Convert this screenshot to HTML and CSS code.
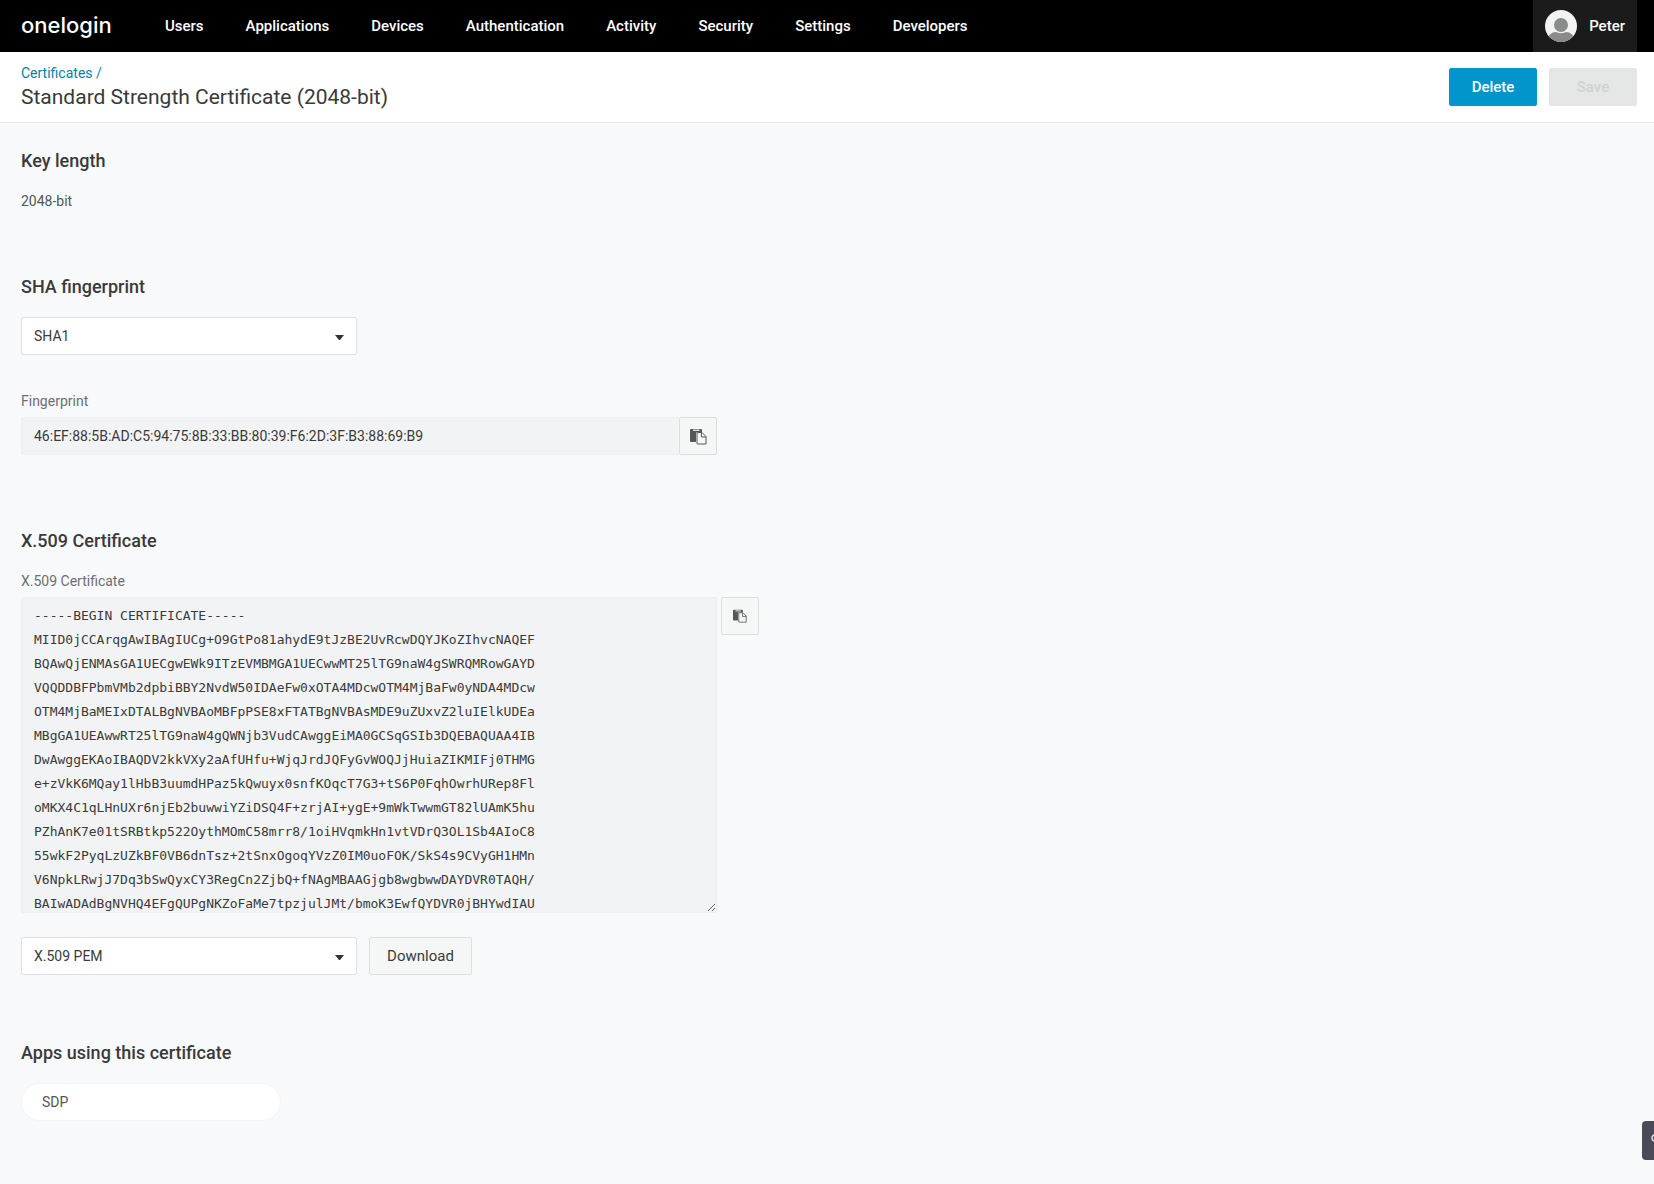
FILE: index.html
```html
<!DOCTYPE html>
<html lang="en">
<head>
  <meta charset="UTF-8">
  <meta name="viewport" content="width=device-width, initial-scale=1.0">
  <title>Standard Strength Certificate (2048-bit)</title>
  <link rel="stylesheet" href="styles.css">
</head>
<body>
  <header class="topbar">
    <a class="logo" href="#">onelogin</a>
    <nav class="menu">
      <a href="#">Users</a>
      <a href="#">Applications</a>
      <a href="#">Devices</a>
      <a href="#">Authentication</a>
      <a href="#">Activity</a>
      <a href="#">Security</a>
      <a href="#">Settings</a>
      <a href="#">Developers</a>
    </nav>
    <button class="user" type="button">
      <svg class="avatar" viewBox="0 0 32 32" aria-hidden="true">
        <clipPath id="face"><circle cx="16" cy="16" r="16"/></clipPath>
        <g clip-path="url(#face)">
          <rect width="32" height="32" fill="#f3f3f3"/>
          <circle cx="16" cy="15" r="7" fill="#8a8c8b"/>
          <path d="M2 34c0-8 4-12 9-12 2 1.500 8 1.500 10 0 5 0 9 4 9 12z" fill="#8a8c8b"/>
        </g>
      </svg>
      Peter
    </button>
  </header>

  <div class="page-header">
    <div>
      <a class="breadcrumb" href="#">Certificates /</a>
      <h1>Standard Strength Certificate (2048-bit)</h1>
    </div>
    <div class="actions">
      <button class="btn primary" type="button">Delete</button>
      <button class="btn" type="button" disabled>Save</button>
    </div>
  </div>

  <main>
    <section class="key-length">
      <h2>Key length</h2>
      <p>2048-bit</p>
    </section>

    <section class="sha">
      <h2>SHA fingerprint</h2>
      <select class="select" aria-label="SHA fingerprint">
        <option>SHA1</option>
      </select>
      <label class="fingerprint-label" for="fingerprint">Fingerprint</label>
      <div class="copy-field">
        <input type="text" id="fingerprint" value="46:EF:88:5B:AD:C5:94:75:8B:33:BB:80:39:F6:2D:3F:B3:88:69:B9" readonly>
        <button class="btn copy" type="button" aria-label="Copy fingerprint">
          <svg width="17" height="17" viewBox="0 0 17 17" aria-hidden="true">
            <path d="M1 1h10q1 0 1 1v2H7.500q-1.500 0-1.500 1.500V14H1q-1 0-1-1V2q0-1 1-1z" fill="#555857"/>
            <path d="M3 1.500h6.500v1.500H3z" fill="#d8dad9"/>
            <path d="M7.500 4.500h4.500l4 4v7.500h-8.500q-.5 0-.5-.5V5q0-.5.5-.5z" fill="#f5f7f6" stroke="#555857"/>
            <path d="M11.500 4.500v4.500h4.500" fill="none" stroke="#555857"/>
          </svg>
        </button>
      </div>
    </section>

    <section class="x509">
      <h2>X.509 Certificate</h2>
      <label for="certificate">X.509 Certificate</label>
      <div class="copy-field spaced">
        <textarea id="certificate" readonly spellcheck="false">-----BEGIN CERTIFICATE-----
MIID0jCCArqgAwIBAgIUCg+O9GtPo81ahydE9tJzBE2UvRcwDQYJKoZIhvcNAQEF
BQAwQjENMAsGA1UECgwEWk9ITzEVMBMGA1UECwwMT25lTG9naW4gSWRQMRowGAYD
VQQDDBFPbmVMb2dpbiBBY2NvdW50IDAeFw0xOTA4MDcwOTM4MjBaFw0yNDA4MDcw
OTM4MjBaMEIxDTALBgNVBAoMBFpPSE8xFTATBgNVBAsMDE9uZUxvZ2luIElkUDEa
MBgGA1UEAwwRT25lTG9naW4gQWNjb3VudCAwggEiMA0GCSqGSIb3DQEBAQUAA4IB
DwAwggEKAoIBAQDV2kkVXy2aAfUHfu+WjqJrdJQFyGvWOQJjHuiaZIKMIFj0THMG
e+zVkK6MQay1lHbB3uumdHPaz5kQwuyx0snfKOqcT7G3+tS6P0FqhOwrhURep8Fl
oMKX4C1qLHnUXr6njEb2buwwiYZiDSQ4F+zrjAI+ygE+9mWkTwwmGT82lUAmK5hu
PZhAnK7e01tSRBtkp522OythMOmC58mrr8/1oiHVqmkHn1vtVDrQ3OL1Sb4AIoC8
55wkF2PyqLzUZkBF0VB6dnTsz+2tSnxOgoqYVzZ0IM0uoFOK/SkS4s9CVyGH1HMn
V6NpkLRwjJ7Dq3bSwQyxCY3RegCn2ZjbQ+fNAgMBAAGjgb8wgbwwDAYDVR0TAQH/
BAIwADAdBgNVHQ4EFgQUPgNKZoFaMe7tpzjulJMt/bmoK3EwfQYDVR0jBHYwdIAU</textarea>
        <button class="btn copy" type="button" aria-label="Copy certificate">
          <svg width="14" height="14" viewBox="0 0 17 17" aria-hidden="true">
            <path d="M1 1h10q1 0 1 1v2H7.500q-1.500 0-1.500 1.500V14H1q-1 0-1-1V2q0-1 1-1z" fill="#555857"/>
            <path d="M3 1.500h6.500v1.500H3z" fill="#d8dad9"/>
            <path d="M7.500 4.500h4.500l4 4v7.500h-8.500q-.5 0-.5-.5V5q0-.5.5-.5z" fill="#f5f7f6" stroke="#555857"/>
            <path d="M11.500 4.500v4.500h4.500" fill="none" stroke="#555857"/>
          </svg>
        </button>
      </div>
      <div class="download-row">
        <select class="select" aria-label="Download format">
          <option>X.509 PEM</option>
        </select>
        <button class="btn download" type="button">Download</button>
      </div>
    </section>

    <section>
      <h2>Apps using this certificate</h2>
      <a class="app" href="#">SDP</a>
    </section>
  </main>

  <button class="side-tab" type="button" aria-label="Help">
    <svg width="8" height="8" viewBox="0 0 8 8" aria-hidden="true">
      <circle cx="5" cy="4" r="3" fill="none" stroke="#d5d7dc" stroke-width="1.500"/>
    </svg>
  </button>
</body>
</html>
```
FILE: styles.css
```css
* {
  box-sizing: border-box;
}

body {
  margin: 0;
  min-height: 100vh;
  background-color: #f8f9fb;
  color: #3a3a3a;
  font-family: Roboto, "Liberation Sans", sans-serif;
  font-size: 14px;
  line-height: 20px;
}

a {
  text-decoration: none;
}

button,
input,
select,
textarea {
  font: inherit;
  color: inherit;
}

h1,
h2,
p {
  margin: 0;
}

.topbar {
  display: flex;
  align-items: center;
  height: 52px;
  padding: 0 17px 0 21px;
  background-color: #000;
  color: #fff;
}

.logo {
  width: 144px;
  padding-bottom: 2px;
  color: #fff;
  font-family: Inter, sans-serif;
  font-size: 22px;
  font-weight: 500;
}

.menu {
  display: flex;
  gap: 42px;
  flex: 1;
  font-size: 15px;
  font-weight: 500;
}

.menu a {
  color: #fff;
}

.user {
  display: flex;
  align-items: center;
  gap: 12px;
  height: 52px;
  padding: 0 12px;
  border: none;
  background-color: #1b1b1b;
  color: #fff;
  font-size: 15px;
  font-weight: 500;
  cursor: pointer;
}

.avatar {
  width: 32px;
  height: 32px;
}

.page-header {
  display: flex;
  justify-content: space-between;
  align-items: center;
  height: 71px;
  padding: 0 17px 0 21px;
  border-bottom: 1px solid #e9ebec;
  background-color: #fff;
}

.breadcrumb {
  display: block;
  color: #0083a9;
}

h1 {
  font-size: 21px;
  font-weight: 400;
  line-height: 28px;
}

.actions {
  display: flex;
  gap: 12px;
}

.btn {
  width: 88px;
  height: 38px;
  padding: 0;
  border: 1px solid #dcdfde;
  border-radius: 2px;
  background-color: #f5f7f6;
  font-size: 15px;
  cursor: pointer;
}

.btn.primary {
  border-color: #0095cb;
  background-color: #0095cb;
  color: #fff;
  font-weight: 500;
}

.btn:disabled {
  border-color: #e5e7e6;
  background-color: #e5e7e6;
  color: #d0d2d1;
  font-weight: 500;
  cursor: default;
}

main {
  padding: 26px 21px 0;
}

.key-length {
  margin-bottom: 64px;
}

.sha {
  margin-bottom: 74px;
}

.x509 {
  margin-bottom: 66px;
}

h2 {
  margin-bottom: 18px;
  font-size: 18px;
  font-weight: 500;
  line-height: 24px;
}

p {
  color: #555;
}

label {
  display: block;
  margin-bottom: 6px;
  color: #6c6f70;
}

.fingerprint-label {
  margin-top: 36px;
}

.select {
  display: block;
  width: 336px;
  height: 38px;
  padding: 0 12px;
  border: 1px solid #dfe2e3;
  border-radius: 2px;
  appearance: none;
  background: #fff url("data:image/svg+xml,%3Csvg xmlns='http://www.w3.org/2000/svg' width='9' height='5'%3E%3Cpath d='M0 0h9L5 5H4z' fill='%23333'/%3E%3C/svg%3E") no-repeat right 12px top 17px;
}

.copy-field {
  display: flex;
  align-items: flex-start;
  max-width: 696px;
}

.copy-field input {
  flex: 1;
  height: 38px;
  padding: 0 12px;
  border: 1px solid #eceeef;
  border-right: none;
  border-radius: 2px 0 0 2px;
  background-color: #f2f3f5;
}

.copy {
  display: flex;
  flex-shrink: 0;
  align-items: center;
  justify-content: center;
  width: 38px;
}

.copy-field.spaced {
  gap: 4px;
  max-width: 738px;
}

textarea {
  flex: 1;
  height: 316px;
  padding: 6px 12px;
  border: 1px solid #eceeef;
  border-radius: 2px;
  background-color: #f2f3f5;
  overflow: hidden;
  resize: vertical;
  white-space: pre;
  font-family: "DejaVu Sans Mono", monospace;
  font-size: 13px;
  line-height: 24px;
}

.download-row {
  display: flex;
  gap: 12px;
  margin-top: 24px;
}

.download {
  width: 103px;
}

.app {
  display: block;
  width: 260px;
  padding: 8px 20px;
  border: 1px solid #f3f4f5;
  border-radius: 19px;
  background-color: #fff;
  color: #555;
}

.side-tab {
  position: fixed;
  right: 0;
  bottom: 24px;
  width: 12px;
  height: 39px;
  padding: 0 0 8px 8px;
  border: none;
  border-radius: 4px 0 0 4px;
  background-color: #484b57;
  overflow: hidden;
}
```
